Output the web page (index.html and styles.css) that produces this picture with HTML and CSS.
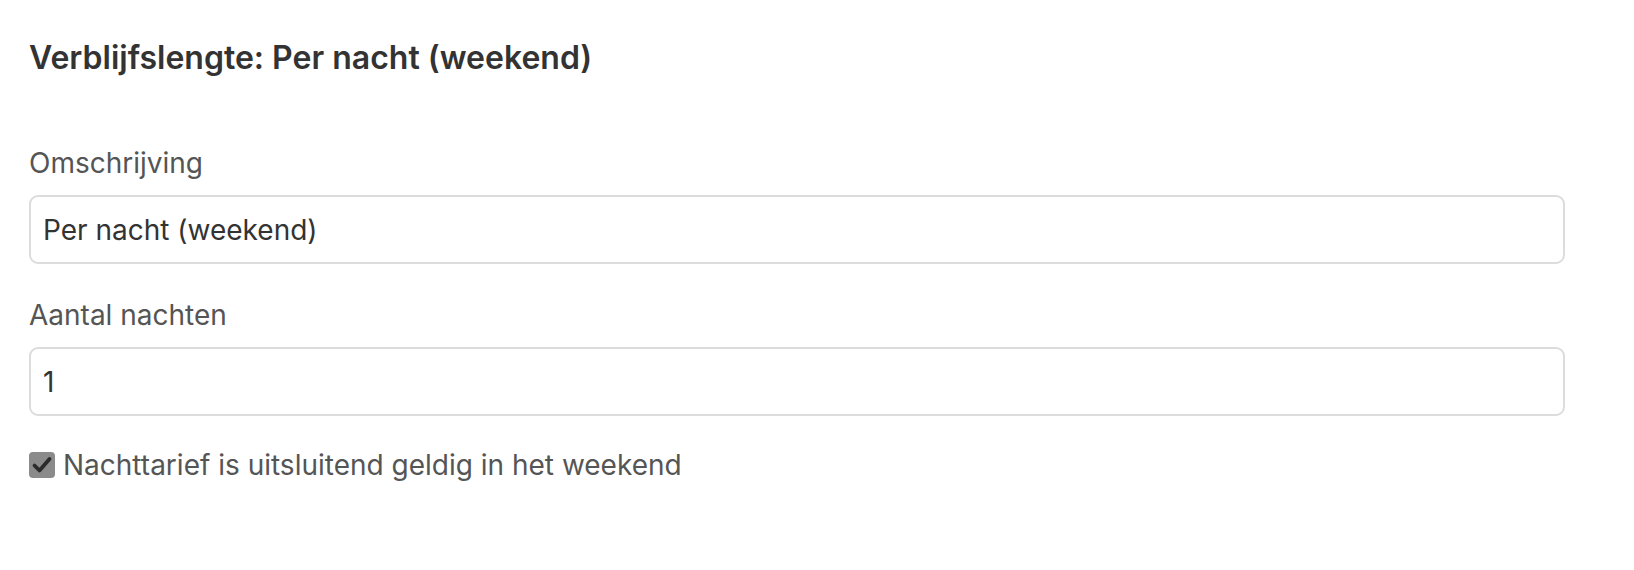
FILE: index.html
```html
<!DOCTYPE html>
<html lang="nl">
<head>
<meta charset="utf-8">
<title>Verblijfslengte</title>
<link rel="stylesheet" href="styles.css">
</head>
<body>
<div class="panel">
  <h2 class="title">Verblijfslengte: Per nacht (weekend)</h2>
  <div class="form">
    <div class="field">
      <label class="label" for="oms">Omschrijving</label>
      <input class="input" id="oms" type="text" value="Per nacht (weekend)">
    </div>
    <div class="field">
      <label class="label" for="aantal">Aantal nachten</label>
      <input class="input" id="aantal" type="text" value="1">
    </div>
    <label class="check">
      <span class="box"><svg viewBox="0 0 26 26" width="26" height="26"><path d="M5.5 13.5 L10.5 18.5 L20.5 7" fill="none" stroke="#2b2b2b" stroke-width="3.8" stroke-linecap="round" stroke-linejoin="round"/></svg></span>
      <span class="check-text">Nachttarief is uitsluitend geldig in het weekend</span>
    </label>
  </div>
</div>
</body>
</html>
```
FILE: styles.css
```css
html, body {
  margin: 0;
  padding: 0;
  background: #fff;
}
body {
  font-family: Inter, "Noto Sans", sans-serif;
}
.panel {
  padding: 38px 69px 0 29px;
}
.title {
  margin: 0;
  font-size: 32px;
  font-weight: 600;
  color: #333;
  line-height: 40px;
}
.form {
  margin-top: 68px;
  display: flex;
  flex-direction: column;
}
.field {
  display: flex;
  flex-direction: column;
  margin-bottom: 34px;
}
.field + .check {
  margin-top: -2px;
}
.label {
  font-size: 28px;
  color: #555;
  line-height: 34px;
  margin-bottom: 15px;
}
.input {
  box-sizing: border-box;
  height: 69px;
  width: 100%;
  border: 2px solid #dcdcdc;
  border-radius: 9px;
  padding: 0 12px;
  font-family: Inter, "Noto Sans", sans-serif;
  font-size: 28px;
  color: #333;
  background: #fff;
  outline: none;
}
.check {
  display: flex;
  align-items: center;
  gap: 8px;
}
.box {
  width: 26px;
  height: 26px;
  border-radius: 4px;
  background: #8b8b8b;
  display: flex;
}
.check-text {
  font-size: 28px;
  color: #555;
  line-height: 34px;
}
```
